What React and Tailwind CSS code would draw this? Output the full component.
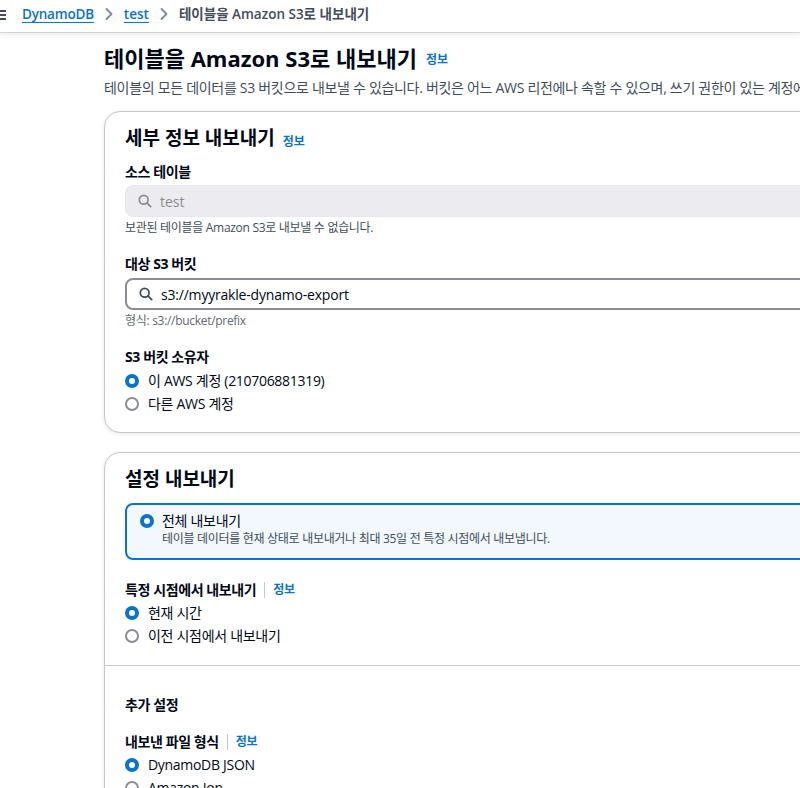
import React from "react";

const FONT = { fontFamily: '"Open Sans", "Noto Sans CJK KR", sans-serif' };

function Chevron() {
  return (
    <svg width="10" height="14" viewBox="0 0 10 14" className="mx-[10px]">
      <path d="M2.5 2 L7.5 7 L2.5 12" fill="none" stroke="#7d8998" strokeWidth="1.8" strokeLinecap="round" strokeLinejoin="round" />
    </svg>
  );
}

function SearchIcon({ color }) {
  return (
    <svg width="14" height="14" viewBox="0 0 16 16" className="shrink-0">
      <circle cx="6.5" cy="6.5" r="5" fill="none" stroke={color} strokeWidth="2" />
      <path d="M10.2 10.2 L14.5 14.5" stroke={color} strokeWidth="2" strokeLinecap="round" />
    </svg>
  );
}

function Radio({ checked }) {
  return checked ? (
    <div className="w-[14px] h-[14px] rounded-full border-[4px] border-[#0972d3] bg-white shrink-0 box-border" />
  ) : (
    <div className="w-[14px] h-[14px] rounded-full border-[2px] border-[#8c8c94] bg-white shrink-0 box-border" />
  );
}

function RadioRow({ checked, children }) {
  return (
    <div className="flex items-center gap-[9px] h-[20px] text-[14px] leading-[20px] text-[#000716] tracking-[-0.3px]">
      <Radio checked={checked} />
      <span>{children}</span>
    </div>
  );
}

function Info() {
  return <span className="text-[12px] font-bold text-[#0972d3] leading-[16px]">정보</span>;
}

function LabelInfo({ children }) {
  return (
    <div className="flex items-center h-[20px] text-[14px] leading-[20px] font-bold text-[#000716] tracking-[-0.4px]">
      <span>{children}</span>
      <span className="mx-[8px] w-px h-[16px] bg-[#c6c6cd]" />
      <Info />
    </div>
  );
}

export default function App() {
  return (
    <div className="w-[800px] h-[788px] overflow-hidden bg-white relative" style={FONT}>
      {/* breadcrumb bar */}
      <div className="relative h-[33px] border-b border-[#d5d5d9] shadow-[0_2px_6px_rgba(0,7,22,0.08)] flex items-center bg-white z-10">
        <svg width="12" height="12" viewBox="0 0 12 12" className="absolute left-[-6px] top-[9px]">
          <path d="M0 2 H12 M0 6 H12 M0 10 H12" stroke="#414d5c" strokeWidth="1.8" />
        </svg>
        <div className="flex items-center pl-[22px] text-[13.5px] leading-[20px] mt-[-4px]">
          <span className="text-[#0972d3] underline underline-offset-[3px] font-semibold tracking-[-0.2px]">DynamoDB</span>
          <Chevron />
          <span className="text-[#0972d3] underline underline-offset-[3px] font-semibold">test</span>
          <Chevron />
          <span className="text-[#414d5c] font-semibold whitespace-nowrap">테이블을 Amazon S3로 내보내기</span>
        </div>
      </div>

      <div className="pl-[104px] w-[1200px]">
        {/* header */}
        <div className="flex items-end mt-[10px] h-[30px]">
          <h1 className="text-[22px] leading-[30px] font-bold text-[#000716] whitespace-nowrap">테이블을 Amazon S3로 내보내기</h1>
          <span className="ml-[9px] mb-[3px]"><Info /></span>
        </div>
        <p className="mt-[5px] text-[14px] leading-[20px] text-[#414d5c] whitespace-nowrap tracking-[-0.3px]">
          테이블의 모든 데이터를 S3 버킷으로 내보낼 수 있습니다. 버킷은 어느 AWS 리전에나 속할 수 있으며, 쓰기 권한이 있는 계정에 속해야 합니다.
        </p>

        {/* card 1 */}
        <div className="mt-[13px] w-[1000px] rounded-[16px] border border-[#c6c6cd] shadow-[0_1px_4px_rgba(0,7,22,0.10)] bg-white px-[20px] pt-[14px] pb-[18px]">
          <div className="flex items-center h-[24px]">
            <h2 className="text-[19px] leading-[24px] font-bold text-[#000716]">세부 정보 내보내기</h2>
            <span className="ml-[8px] mt-[3px]"><Info /></span>
          </div>

          <div className="mt-[12px] text-[14px] leading-[20px] font-bold text-[#000716] tracking-[-0.4px]">소스 테이블</div>
          <div className="mt-[3px] h-[32px] rounded-[8px] bg-[#ebebf0] border border-[#e9e9ed] flex items-center pl-[12px] gap-[8px]">
            <SearchIcon color="#8c8c94" />
            <span className="text-[14px] text-[#8c8c94]">test</span>
          </div>
          <div className="mt-[3px] text-[12px] leading-[16px] text-[#414d5c] tracking-[-0.3px]">보관된 테이블을 Amazon S3로 내보낼 수 없습니다.</div>

          <div className="mt-[18px] text-[14px] leading-[20px] font-bold text-[#000716] tracking-[-0.4px]">대상 S3 버킷</div>
          <div className="mt-[4px] h-[32px] rounded-[8px] bg-white border-2 border-[#8c8c94] flex items-center pl-[12px] gap-[8px]">
            <SearchIcon color="#414d5c" />
            <span className="text-[14px] text-[#000716] tracking-[-0.2px]">s3://myyrakle-dynamo-export</span>
          </div>
          <div className="mt-[3px] text-[12px] leading-[16px] text-[#656871] tracking-[-0.3px]">형식: s3://bucket/prefix</div>

          <div className="mt-[18px] text-[14px] leading-[20px] font-bold text-[#000716] tracking-[-0.4px]">S3 버킷 소유자</div>
          <div className="mt-[4px] flex flex-col gap-[3px]">
            <RadioRow checked>이 AWS 계정 (210706881319)</RadioRow>
            <RadioRow>다른 AWS 계정</RadioRow>
          </div>
        </div>

        {/* card 2 */}
        <div className="mt-[19px] w-[1000px] rounded-[16px] border border-[#c6c6cd] shadow-[0_1px_4px_rgba(0,7,22,0.10)] bg-white pt-[14px] pb-[40px]">
          <div className="px-[20px]">
            <h2 className="text-[19px] leading-[24px] font-bold text-[#000716]">설정 내보내기</h2>
            <div className="mt-[12px] rounded-[8px] border-2 border-[#0972d3] bg-[#f2f8fd] pl-[13px] pt-[6px] pb-[11px] flex gap-[8px]">
              <div className="pt-[3px]"><Radio checked /></div>
              <div>
                <div className="text-[14px] leading-[20px] text-[#000716] tracking-[-0.3px]">전체 내보내기</div>
                <div className="text-[12px] leading-[16px] text-[#414d5c] tracking-[-0.3px]">테이블 데이터를 현재 상태로 내보내거나 최대 35일 전 특정 시점에서 내보냅니다.</div>
              </div>
            </div>

            <div className="mt-[20px]"><LabelInfo>특정 시점에서 내보내기</LabelInfo></div>
            <div className="mt-[3px] flex flex-col gap-[3px]">
              <RadioRow checked>현재 시간</RadioRow>
              <RadioRow>이전 시점에서 내보내기</RadioRow>
            </div>
          </div>

          <div className="mt-[19px] h-px bg-[#c6c6cd]" />

          <div className="px-[20px]">
            <div className="mt-[29px] text-[14px] leading-[20px] font-bold text-[#000716] tracking-[-0.4px]">추가 설정</div>
            <div className="mt-[17px]"><LabelInfo>내보낸 파일 형식</LabelInfo></div>
            <div className="mt-[3px] flex flex-col gap-[3px]">
              <RadioRow checked>DynamoDB JSON</RadioRow>
              <RadioRow>Amazon Ion</RadioRow>
            </div>
          </div>
        </div>
      </div>
    </div>
  );
}
